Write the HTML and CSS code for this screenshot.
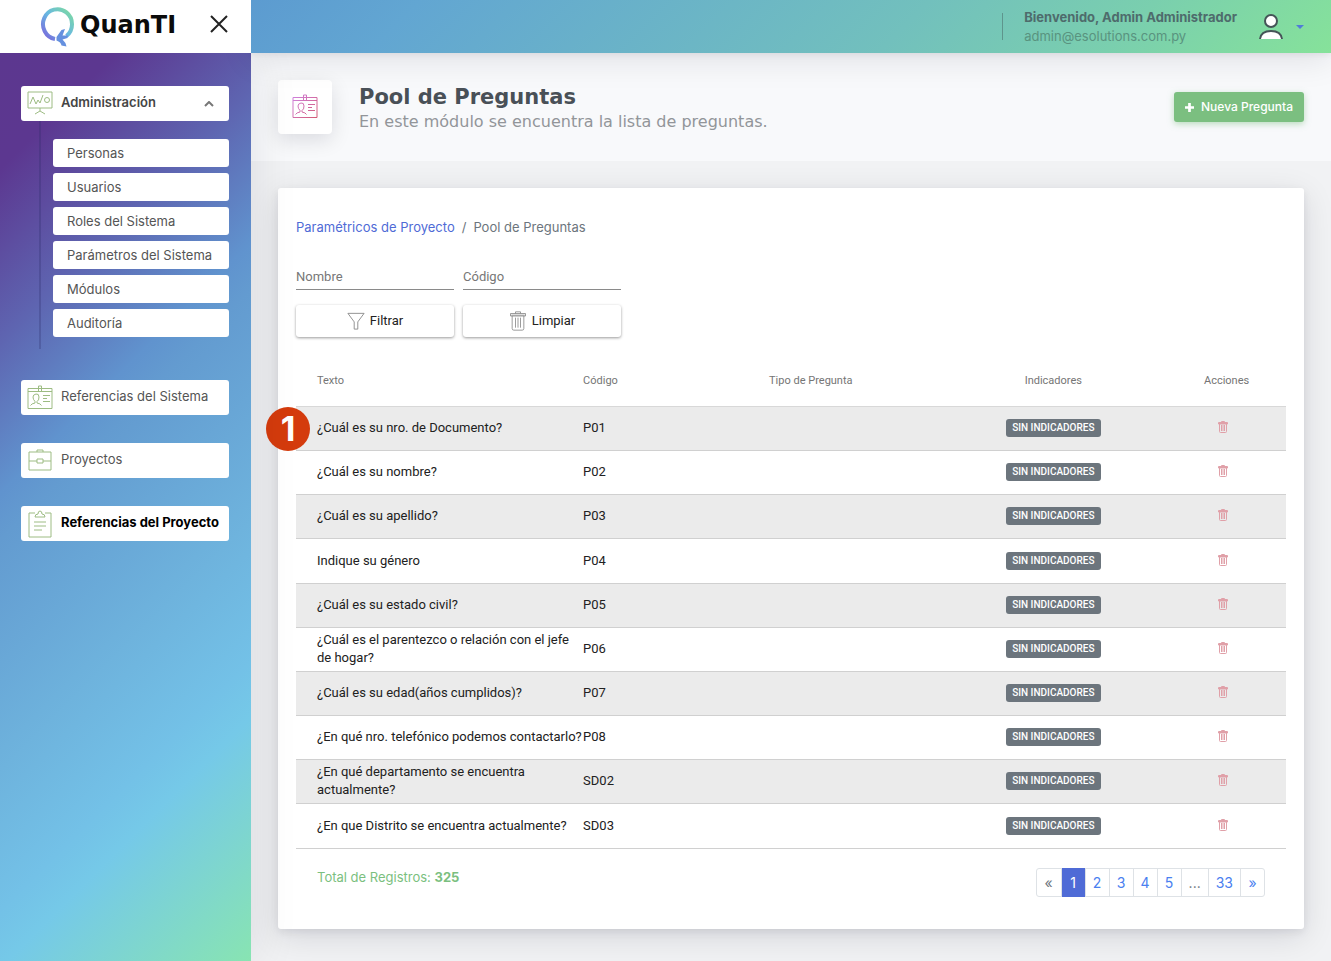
FILE: index.html
```html
<!DOCTYPE html>
<html lang="es">
<head>
<meta charset="utf-8">
<meta name="viewport" content="width=device-width, initial-scale=1">
<title>Pool de Preguntas - QuanTI</title>
<link rel="stylesheet" href="styles.css">
</head>
<body>
<svg class="sprite" aria-hidden="true">
  <symbol id="trash" viewBox="0 0 20 24"><path d="M2 5h16M1 3h18v3H1zM7 3V1h6v2M3 6v15q0 2 2 2h10q2 0 2-2V6M7 8v12M10 8v12M13 8v12"/></symbol>
  <symbol id="idcard" viewBox="0 0 26 26"><path d="M1 3.500h24v20H1zM1 6.500h24M11.500 6.500V1h3v5.500M3.500 20.500q1-2 4.500-2.500v-1.500q-2-2-2-4.500t3-3 3 3-2 4.500v1.500q3.500.5 4.500 2.500M16 10.500h7M16 13.500h4M16 16.500h7"/></symbol>
</svg>
<div class="app">
  <div class="brand">
    <svg class="brand-mark" viewBox="0 0 36 42" aria-hidden="true">
      <defs><linearGradient id="ring" x1="0" y1="1" x2="1" y2="0"><stop offset="0" stop-color="#7a62dc"/><stop offset=".5" stop-color="#68b8e2"/><stop offset="1" stop-color="#7edc9e"/></linearGradient></defs>
      <path d="M15 33A14.500 15 0 1 1 26.500 30" fill="none" stroke="url(#ring)" stroke-width="4"/>
      <path d="M25 23L21.500 24L16.500 31L16.500 34.500Q21 36 21.500 39.500L26.500 40.500Q25.500 36 22.500 33.500L27.500 32L28 29.500L22.500 29.500Z" fill="#6590df"/>
    </svg>
    <span class="brand-name">QuanTI</span>
    <button class="close" aria-label="Cerrar menú"><svg viewBox="0 0 18 18"><path d="M1 1l16 16M17 1L1 17"/></svg></button>
  </div>
  <header class="topbar">
    <div class="user"><strong>Bienvenido, Admin Administrador</strong><span>admin@esolutions.com.py</span></div>
    <button class="account" aria-label="Cuenta">
      <svg class="avatar" viewBox="0 0 24 26"><circle cx="12" cy="7" r="6"/><path d="M1 25Q2 17 12 17T23 25"/></svg>
      <svg class="caret" viewBox="0 0 8 4"><path d="M0 0h8L4 4z"/></svg>
    </button>
  </header>
  <nav class="sidebar" aria-label="Principal">
    <section>
      <button class="nav-item open" aria-expanded="true">
        <svg viewBox="0 0 26 26"><path d="M1 1h24v16H1zM13 17v3M8 23l5-3 5 3M3 13l3-7 3 7 2-4 2 3 3-8"/><circle cx="20" cy="9" r="2.500"/></svg>
        <span>Administración</span>
        <svg class="chevron" viewBox="0 0 10 6"><path d="M1 5l4-4 4 4"/></svg>
      </button>
      <ul class="subnav">
        <li><a href="#">Personas</a></li>
        <li><a href="#">Usuarios</a></li>
        <li><a href="#">Roles del Sistema</a></li>
        <li><a href="#">Parámetros del Sistema</a></li>
        <li><a href="#">Módulos</a></li>
        <li><a href="#">Auditoría</a></li>
      </ul>
    </section>
    <button class="nav-item"><svg><use href="#idcard"/></svg><span>Referencias del Sistema</span></button>
    <button class="nav-item"><svg viewBox="0 0 26 26"><path d="M2 4h22v18H2zM10 4V2h6v2M2 13h8M16 13h8M10 11h6v4h-6z"/></svg><span>Proyectos</span></button>
    <button class="nav-item current"><svg viewBox="0 0 26 28"><path d="M8 3H2v24h22V3h-6M8 7q0-3 3-3 0-3 2-3t2 3q3 0 3 3zM7 12h12M7 16h12M7 20h8"/></svg><span>Referencias del Proyecto</span></button>
  </nav>
  <main>
    <div class="page-head">
      <div class="head-icon">
        <svg><defs><linearGradient id="pink" gradientUnits="userSpaceOnUse" x1="0" y1="0" x2="26" y2="26"><stop offset="0" stop-color="#cf84e6"/><stop offset="1" stop-color="#d4576c"/></linearGradient></defs><use href="#idcard"/></svg>
      </div>
      <div class="head-text"><h1>Pool de Preguntas</h1><p>En este módulo se encuentra la lista de preguntas.</p></div>
      <button class="new"><svg viewBox="0 0 10 10"><path d="M5 0v10M0 5h10"/></svg>Nueva Pregunta</button>
    </div>
    <div class="card">
      <nav class="crumbs" aria-label="Ruta"><a href="#">Paramétricos de Proyecto</a><span>/</span><span>Pool de Preguntas</span></nav>
      <form class="filters">
        <input type="text" placeholder="Nombre" aria-label="Nombre">
        <input type="text" placeholder="Código" aria-label="Código">
        <button type="button"><svg viewBox="0 0 20 20"><path d="M1 1.500h18L12 11v8H8v-8z"/></svg>Filtrar</button>
        <button type="button"><svg><use href="#trash"/></svg>Limpiar</button>
      </form>
      <div class="table-wrap">
      <span class="marker">1</span>
      <table>
        <colgroup><col class="c-text"><col class="c-code"><col class="c-type"><col class="c-ind"><col class="c-act"></colgroup>
        <thead><tr><th>Texto</th><th>Código</th><th>Tipo de Pregunta</th><th>Indicadores</th><th>Acciones</th></tr></thead>
        <tbody>
          <tr><td>¿Cuál es su nro. de Documento?</td><td>P01</td><td></td><td><span class="badge">SIN INDICADORES</span></td><td><button aria-label="Eliminar"><svg><use href="#trash"/></svg></button></td></tr>
          <tr><td>¿Cuál es su nombre?</td><td>P02</td><td></td><td><span class="badge">SIN INDICADORES</span></td><td><button aria-label="Eliminar"><svg><use href="#trash"/></svg></button></td></tr>
          <tr><td>¿Cuál es su apellido?</td><td>P03</td><td></td><td><span class="badge">SIN INDICADORES</span></td><td><button aria-label="Eliminar"><svg><use href="#trash"/></svg></button></td></tr>
          <tr><td>Indique su género</td><td>P04</td><td></td><td><span class="badge">SIN INDICADORES</span></td><td><button aria-label="Eliminar"><svg><use href="#trash"/></svg></button></td></tr>
          <tr><td>¿Cuál es su estado civil?</td><td>P05</td><td></td><td><span class="badge">SIN INDICADORES</span></td><td><button aria-label="Eliminar"><svg><use href="#trash"/></svg></button></td></tr>
          <tr><td>¿Cuál es el parentezco o relación con el jefe de hogar?</td><td>P06</td><td></td><td><span class="badge">SIN INDICADORES</span></td><td><button aria-label="Eliminar"><svg><use href="#trash"/></svg></button></td></tr>
          <tr><td>¿Cuál es su edad(años cumplidos)?</td><td>P07</td><td></td><td><span class="badge">SIN INDICADORES</span></td><td><button aria-label="Eliminar"><svg><use href="#trash"/></svg></button></td></tr>
          <tr><td>¿En qué nro. telefónico podemos contactarlo?</td><td>P08</td><td></td><td><span class="badge">SIN INDICADORES</span></td><td><button aria-label="Eliminar"><svg><use href="#trash"/></svg></button></td></tr>
          <tr><td>¿En qué departamento se encuentra actualmente?</td><td>SD02</td><td></td><td><span class="badge">SIN INDICADORES</span></td><td><button aria-label="Eliminar"><svg><use href="#trash"/></svg></button></td></tr>
          <tr><td>¿En que Distrito se encuentra actualmente?</td><td>SD03</td><td></td><td><span class="badge">SIN INDICADORES</span></td><td><button aria-label="Eliminar"><svg><use href="#trash"/></svg></button></td></tr>
        </tbody>
      </table>
      </div>
      <div class="card-foot">
        <p>Total de Registros: <strong>325</strong></p>
        <nav class="pages" aria-label="Paginación"><span>«</span><a href="#" class="active" aria-current="page">1</a><a href="#">2</a><a href="#">3</a><a href="#">4</a><a href="#">5</a><span>...</span><a href="#">33</a><a href="#">»</a></nav>
      </div>
    </div>
  </main>
</div>
</body>
</html>
```
FILE: styles.css
```css
* { box-sizing: border-box; }
body { margin: 0; font: 13px/18px Inter, "Open Sans", sans-serif; color: #495057; background: #f1f2f4; }
button, input { font: inherit; color: inherit; }
button { border: 0; padding: 0; background: none; cursor: pointer; }
a { text-decoration: none; color: inherit; }
h1, p, ul { margin: 0; padding: 0; }
svg { fill: none; stroke: currentColor; stroke-width: 1; flex: none; }
.sprite { position: absolute; width: 0; height: 0; }

.app { display: grid; grid-template-columns: 251px minmax(0, 1fr); grid-template-rows: 53px 1fr; min-height: 100vh; }

.brand { display: flex; align-items: center; background: #fff; padding: 0 23px 0 40px; z-index: 3; }
.brand-mark { width: 36px; height: 42px; stroke: none; }
.brand-name { flex: 1; margin-left: 4px; font: 700 24px/32px "DejaVu Sans", sans-serif; color: #0b0b0b; padding-bottom: 4px; }
.close { display: flex; padding-bottom: 6px; }
.close svg { width: 18px; height: 18px; stroke: #222; stroke-width: 2; }

.topbar { display: flex; justify-content: flex-end; align-items: center; padding: 0 27px 0 0; z-index: 2;
  background: linear-gradient(135deg, #5c9bd0 0%, #62a6d2 15%, #72c0bd 60%, #7acfae 80%, #86e29a 100%);
  box-shadow: 0 7px 32px rgba(8, 10, 37, .1), 0 2px 6px rgba(8, 10, 37, .06); }
.user { border-left: 1px solid rgba(52, 58, 64, .35); padding-left: 21px; display: flex; flex-direction: column; margin-right: 22px; height: 27px; justify-content: center; }
.user strong { color: #4e6b6c; font-weight: 700; }
.user span { color: #59937f; }
.user strong, .user span { line-height: 19px; padding-bottom: 1px; margin-bottom: -1px; }
.account { display: flex; align-items: center; gap: 13px; }
.avatar { width: 24px; height: 26px; fill: #fff; stroke: #455457; stroke-width: 2; }
.caret { width: 8px; height: 4px; fill: #507bd8; stroke: none; }

.sidebar { padding: 33px 22px 28px 21px; display: flex; flex-direction: column; gap: 28px; z-index: 1;
  background: linear-gradient(135deg, #5c378f 0%, #5c3790 10%, #5e65b1 25%, #6093ce 38%, #639bd0 42%, #6eb3dd 62%, #73c1e7 74%, #75c9e8 79%, #88e4b2 100%);
  box-shadow: 7px 0 40px rgba(8, 10, 37, .08); }
.nav-item { display: flex; align-items: center; width: 100%; height: 35px; gap: 8px; padding: 0 15px 0 6px; background: #fff; border-radius: 3px; text-align: left; color: #555; }
.nav-item svg { width: 26px; height: 28px; stroke: #9dbc83; }
.nav-item span { flex: 1; white-space: nowrap; padding-bottom: 3px; }
.nav-item.open { font-weight: 600; color: #454545; }
.nav-item.current { font-weight: 700; color: #000; padding-right: 0; }
.nav-item .chevron { width: 10px; height: 6px; stroke: #777; stroke-width: 2; }
.subnav { list-style: none; display: flex; flex-direction: column; gap: 6px; margin: 0 0 3px 18px; padding: 18px 0 12px 12px; border-left: 2px solid rgba(40, 40, 100, .25); }
.subnav a { display: block; padding: 5px 14px; background: #fff; border-radius: 3px; color: #555; line-height: 18px; }

main { min-width: 0; padding-bottom: 32px; }
.page-head { display: flex; align-items: center; background: #f8f9fb; height: 108px; padding: 0 27px; }
.head-icon { width: 54px; height: 54px; background: #fff; border-radius: 4px; display: grid; place-items: center; box-shadow: 0 6px 20px rgba(8, 10, 37, .12); }
.head-icon svg { width: 26px; height: 26px; stroke: url(#pink); }
.head-text { flex: 1; margin-left: 27px; padding-top: 4px; font-family: "DejaVu Sans", sans-serif; }
.head-text h1 { font-size: 21px; line-height: 26px; font-weight: 700; color: #495057; }
.head-text p { font-size: 16px; line-height: 24px; color: #929599; }
.new { display: flex; align-items: center; gap: 7px; height: 30px; padding: 0 11px; background: #7bbf80; color: #fff; font-size: 12px; font-weight: 500; border-radius: 3px; box-shadow: 0 2px 6px rgba(123, 191, 128, .5); }
.new svg { width: 9px; height: 9px; stroke-width: 3; }

.card { margin: 27px 27px 0; padding: 30px 18px 32px; background: #fff; border-radius: 3px; box-shadow: 0 8px 32px rgba(8, 10, 37, .12), 0 3px 8px rgba(8, 10, 37, .08); }
.crumbs { display: flex; gap: 7px; color: #6c757d; }
.crumbs a { color: #4f6bd6; }
.filters { display: grid; grid-template-columns: 158px 158px; column-gap: 9px; row-gap: 15px; margin-top: 29px; font-family: Roboto, sans-serif; }
.filters input { width: 100%; height: 25px; padding: 0 0 1px; border: 0; border-bottom: 1px solid #8a8a8a; background: none; outline: 0; }
.filters input::placeholder { color: #777; opacity: 1; }
.filters button { display: flex; justify-content: center; align-items: center; gap: 5px; height: 32px; border-radius: 3px; background: #fff; color: #222; box-shadow: 0 1px 3px rgba(0, 0, 0, .4); }
.filters svg { width: 18px; height: 20px; stroke: #888; }

.table-wrap { position: relative; margin-top: 16px; }
.marker { position: absolute; left: -30px; top: 54px; width: 44px; height: 44px; border-radius: 50%; background: #d43b0d; color: #fff; text-align: center; font: 700 34px/44px Inter, sans-serif; }
table { width: 100%; border-collapse: collapse; table-layout: fixed; font-family: Roboto, sans-serif; color: #212121; }
.c-text { width: 29%; } .c-code { width: 10%; } .c-type { width: 26%; } .c-ind { width: 23%; } .c-act { width: 12%; }
th { height: 53px; padding: 4px 0 0; text-align: left; font-size: 11px; font-weight: 400; color: #757575; }
td { height: 44px; padding: 0; border-top: 1px solid #d8d8d8; border-bottom: 1px solid #d0d0d0; }
tr:nth-child(6n + 4) td { height: 45px; }
th:first-child, td:first-child { padding-left: 21px; }
th:nth-child(3), th:nth-child(4), td:nth-child(4), th:last-child, td:last-child { text-align: center; }
td:last-child { padding: 0 8px 3px 0; }
tbody tr:nth-child(odd) { background: #ebebeb; }
.badge { display: inline-block; padding: 0 6px; border-radius: 3px; background: #6c757d; color: #fff; font-size: 10px; font-weight: 500; line-height: 18px; vertical-align: middle; }
td button { display: inline-flex; vertical-align: middle; }
td svg { width: 10px; height: 12px; stroke: #e0a0a8; stroke-width: 2; }

.card-foot { display: flex; justify-content: space-between; align-items: flex-start; padding: 19px 21px 0; color: #7bbf80; }
.pages { display: flex; border: 1px solid #dee2e6; border-radius: 3px; font-size: 14px; line-height: 27px; color: #6c757d; }
.pages > * { padding: 0 7px; min-width: 24px; text-align: center; border-left: 1px solid #dee2e6; }
.pages > :first-child { border-left: 0; }
.pages a { color: #4a80f0; }
.pages .active { background: #4f6bd6; color: #fff; margin: -1px 0; line-height: 29px; }
```
